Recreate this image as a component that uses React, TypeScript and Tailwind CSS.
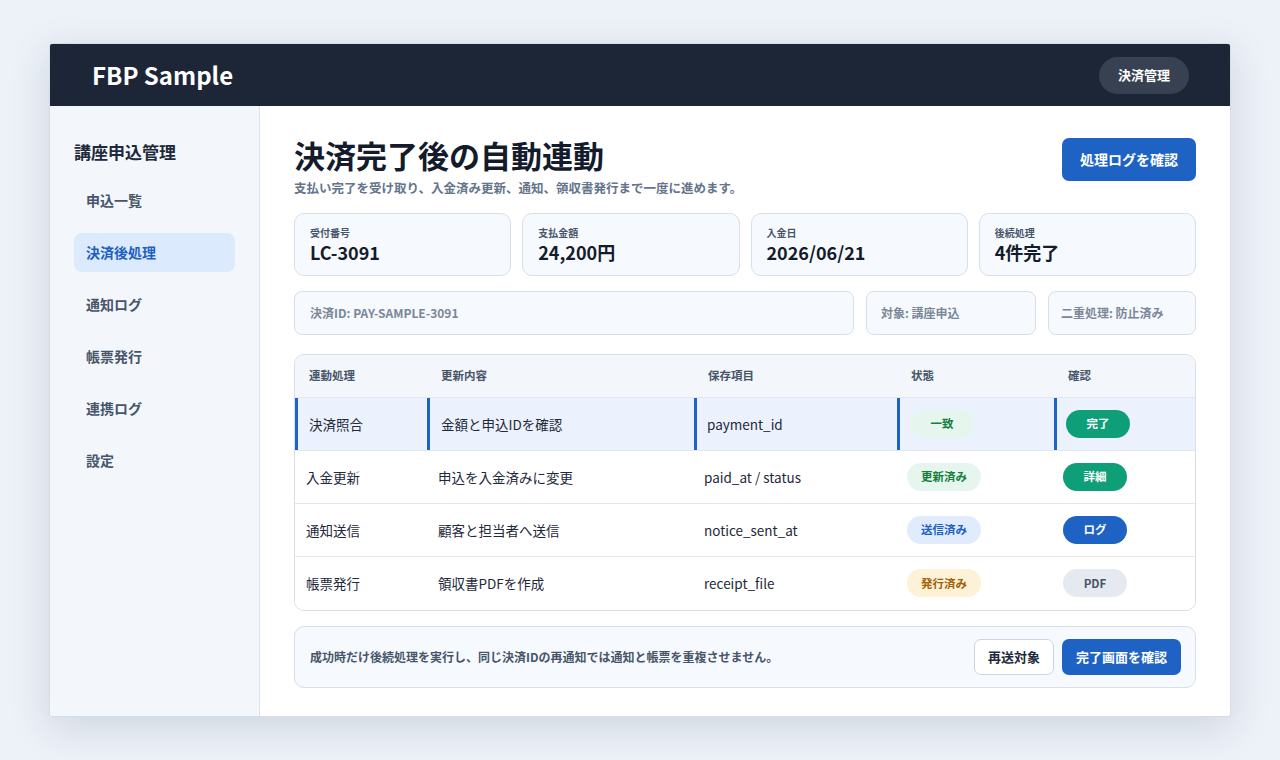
const rows = [
  { a: "決済照合", b: "金額と申込IDを確認", c: "payment_id", s: "一致", sc: "bg-[#e6f6ee] text-[#15803d]", k: "完了", kc: "bg-[#0f9f78] text-white", hl: true },
  { a: "入金更新", b: "申込を入金済みに変更", c: "paid_at / status", s: "更新済み", sc: "bg-[#e6f6ee] text-[#15803d]", k: "詳細", kc: "bg-[#0f9f78] text-white", hl: false },
  { a: "通知送信", b: "顧客と担当者へ送信", c: "notice_sent_at", s: "送信済み", sc: "bg-[#e0ecfd] text-[#1e5fc4]", k: "ログ", kc: "bg-[#1e63c4] text-white", hl: false },
  { a: "帳票発行", b: "領収書PDFを作成", c: "receipt_file", s: "発行済み", sc: "bg-[#fdf1d6] text-[#a16207]", k: "PDF", kc: "bg-[#e5e9f0] text-[#475569]", hl: false },
];

const stats = [
  ["受付番号", "LC-3091"],
  ["支払金額", "24,200円"],
  ["入金日", "2026/06/21"],
  ["後続処理", "4件完了"],
];

const nav = ["申込一覧", "決済後処理", "通知ログ", "帳票発行", "連携ログ", "設定"];

export default function App() {
  const cell = (hl: boolean, first = false) =>
    `flex items-center px-3 ${hl ? "border-l-[3px] border-[#1e63c4]" : first ? "" : ""}`;
  return (
    <div
      className="w-[1280px] h-[760px] bg-[#edf2f9] pt-[43px] pl-[49px]"
      style={{ fontFamily: '"Noto Sans CJK JP", "Noto Sans", sans-serif' }}
    >
      <div className="w-[1182px] h-[674px] bg-white rounded-[3px] shadow-[0_10px_40px_rgba(30,41,59,0.15)] border border-[#d6dde8] overflow-hidden flex flex-col">
        <header className="h-[62px] bg-[#1d2637] flex items-center justify-between pl-[42px] pr-[41px] shrink-0">
          <div className="text-white text-[24px] font-bold">FBP Sample</div>
          <div className="h-[37px] px-[19px] rounded-full bg-[#374152] text-white text-[13px] font-bold flex items-center">決済管理</div>
        </header>
        <div className="flex flex-1">
          <aside className="w-[210px] bg-[#f3f7fc] border-r border-[#dbe3ee] pt-[33px] px-[24px]">
            <div className="text-[17px] font-bold text-[#1e293b] mb-[16px]">講座申込管理</div>
            <div className="flex flex-col gap-[13px]">
              {nav.map((n) => (
                <div key={n} className={`h-[39px] rounded-[8px] px-[12px] flex items-center text-[14px] font-bold ${n === "決済後処理" ? "bg-[#dbeafd] text-[#1e5fc4]" : "text-[#475569]"}`}>{n}</div>
              ))}
            </div>
          </aside>
          <main className="flex-1 pt-[28px] pl-[34px] pr-[34px]">
            <div className="flex justify-between items-start">
              <div>
                <h1 className="text-[31px] font-bold text-[#141c2b] leading-[42px]">決済完了後の自動連動</h1>
                <p className="text-[12.5px] font-bold text-[#64748b] mt-[3px]">支払い完了を受け取り、入金済み更新、通知、領収書発行まで一度に進めます。</p>
              </div>
              <button className="mt-[4px] h-[43px] px-[18px] rounded-[7px] bg-[#1e63c4] text-white text-[14px] font-bold">処理ログを確認</button>
            </div>
            <div className="grid grid-cols-4 gap-[11px] mt-[15px]">
              {stats.map(([l, v]) => (
                <div key={l} className="h-[63px] rounded-[10px] border border-[#d6dfea] bg-[#f6f9fd] px-[15px] pt-[11px]">
                  <div className="text-[10px] font-bold text-[#475569]">{l}</div>
                  <div className="text-[18px] font-bold text-[#141c2b] leading-[24px]">{v}</div>
                </div>
              ))}
            </div>
            <div className="flex gap-[12px] mt-[15px] text-[12px] font-bold text-[#7b8798]">
              <div className="w-[560px] h-[44px] rounded-[8px] border border-[#d6dfea] bg-[#f6f9fd] px-[15px] flex items-center">決済ID: PAY-SAMPLE-3091</div>
              <div className="w-[170px] h-[44px] rounded-[8px] border border-[#d6dfea] bg-[#f6f9fd] px-[14px] flex items-center">対象: 講座申込</div>
              <div className="flex-1 h-[44px] rounded-[8px] border border-[#d6dfea] bg-[#f6f9fd] px-[12px] flex items-center">二重処理: 防止済み</div>
            </div>
            <div className="mt-[19px] rounded-[10px] border border-[#d6dfea] overflow-hidden">
              <div className="grid grid-cols-[132px_267px_203px_157px_1fr] h-[43px] bg-[#f3f6fa] text-[11.5px] font-bold text-[#475569] border-b border-[#e2e8f0]">
                {["連動処理", "更新内容", "保存項目", "状態", "確認"].map((h) => (
                  <div key={h} className="flex items-center px-[14px]">{h}</div>
                ))}
              </div>
              {rows.map((r, i) => (
                <div key={r.a} className={`grid grid-cols-[132px_267px_203px_157px_1fr] h-[53px] text-[13.5px] text-[#1e293b] ${i < 3 ? "border-b border-[#e2e8f0]" : ""} ${r.hl ? "bg-[#ebf2fd]" : "bg-white"}`}>
                  <div className={`${cell(r.hl)} pl-[11px]`}>{r.a}</div>
                  <div className={`${cell(r.hl)} pl-[11px]`}>{r.b}</div>
                  <div className={`${cell(r.hl)} pl-[10px]`}>{r.c}</div>
                  <div className={`${cell(r.hl)} pl-[10px]`}>
                    <span className={`h-[28px] px-[14px] min-w-[64px] justify-center rounded-full flex items-center text-[11.5px] font-bold ${r.sc}`}>{r.s}</span>
                  </div>
                  <div className={`${cell(r.hl)} pl-[9px]`}>
                    <span className={`h-[28px] w-[64px] justify-center rounded-full flex items-center text-[11.5px] font-bold ${r.kc}`}>{r.k}</span>
                  </div>
                </div>
              ))}
            </div>
            <div className="mt-[15px] h-[62px] rounded-[10px] border border-[#d6dfea] bg-[#f6f9fd] flex items-center justify-between pl-[15px] pr-[14px]">
              <div className="text-[12px] font-bold text-[#475569]">成功時だけ後続処理を実行し、同じ決済IDの再通知では通知と帳票を重複させません。</div>
              <div className="flex gap-[8px]">
                <button className="h-[36px] px-[13px] rounded-[7px] border border-[#cbd5e1] bg-white text-[13px] font-bold text-[#1e293b]">再送対象</button>
                <button className="h-[36px] px-[14px] rounded-[7px] bg-[#1e63c4] text-white text-[13px] font-bold">完了画面を確認</button>
              </div>
            </div>
          </main>
        </div>
      </div>
    </div>
  );
}
